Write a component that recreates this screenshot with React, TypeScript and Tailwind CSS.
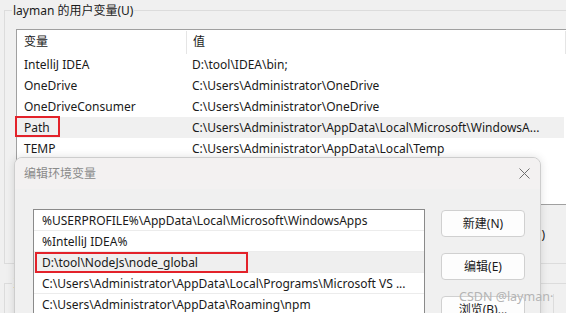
const userVars = [
  { name: 'IntelliJ IDEA', value: 'D:\\tool\\IDEA\\bin;' },
  { name: 'OneDrive', value: 'C:\\Users\\Administrator\\OneDrive' },
  { name: 'OneDriveConsumer', value: 'C:\\Users\\Administrator\\OneDrive' },
  { name: 'Path', value: 'C:\\Users\\Administrator\\AppData\\Local\\Microsoft\\WindowsA...' },
  { name: 'TEMP', value: 'C:\\Users\\Administrator\\AppData\\Local\\Temp' },
]

const pathEntries = [
  '%USERPROFILE%\\AppData\\Local\\Microsoft\\WindowsApps',
  '%IntelliJ IDEA%',
  'D:\\tool\\NodeJs\\node_global',
  'C:\\Users\\Administrator\\AppData\\Local\\Programs\\Microsoft VS ...',
  'C:\\Users\\Administrator\\AppData\\Roaming\\npm',
]

function DialogButton({ label }: { label: string }) {
  return (
    <button className="flex h-[27px] w-[84px] items-center justify-center rounded-[4px] border border-[#d0d0d0] bg-[#fdfdfd] text-[12px] text-[#1a1a1a]">
      {label}
    </button>
  )
}

export default function App() {
  return (
    <div className="relative h-[313px] w-[566px] overflow-hidden bg-[#f0f0f0] font-['Noto_Sans','Noto_Sans_CJK_SC',sans-serif] text-[12px] text-[#1a1a1a]">
      <div className="pl-[4px] pt-[10px]">
        {/* user variables group */}
        <div className="h-[254px] w-[600px] border-b border-l border-t border-[#dcdcdc]">
          <div className="-mt-[9px] ml-[7px] w-fit bg-[#f0f0f0] px-[1px] leading-[17px]">layman 的用户变量(U)</div>
          <div className="ml-[11px] mt-[10px] h-[176px] w-[600px] border border-[#a0a0a0] bg-white">
            <div className="flex h-[24px] items-center leading-[24px]">
              <div className="w-[169px] pl-[7px]">变量</div>
              <div className="h-[23px] w-px bg-[#e5e5e5]" />
              <div className="w-[378px] pl-[6px]">值</div>
              <div className="h-[23px] w-px bg-[#e5e5e5]" />
            </div>
            {userVars.map((v) => (
              <div
                key={v.name}
                className={`flex h-[21px] w-[547px] items-center leading-[21px] ${v.name === 'Path' ? 'bg-[#f0f0f0]' : ''}`}
              >
                <div className="relative w-[170px] pl-[7px]">
                  {v.name}
                  {v.name === 'Path' && (
                    <div className="absolute -left-[2px] -top-[1px] h-[21px] w-[45px] border-2 border-[#e3222a]" />
                  )}
                </div>
                <div className="whitespace-nowrap pl-[5px]">{v.value}</div>
              </div>
            ))}
          </div>
          <div className="ml-[478px] mt-[16px] flex h-[27px] w-[84px] items-center justify-center">删除(D)</div>
        </div>
        {/* system variables group */}
        <div className="mt-[19px] h-[60px] w-[600px] border-l border-t border-[#dcdcdc]">
          <div className="-mt-[9px] ml-[7px] w-fit bg-[#f0f0f0] px-[1px] leading-[17px]">系统变量(S)</div>
          <div className="ml-[548px] mt-[2px] h-[40px] w-px bg-[#dcdcdc]" />
        </div>
      </div>

      {/* edit dialog */}
      <div className="absolute left-[14px] top-[157px] h-[170px] w-[527px] overflow-hidden rounded-t-[8px] border border-[#cdcdcd] bg-[#f0f0f0] shadow-[0_0_8px_rgba(0,0,0,0.12)]">
        <div className="flex h-[31px] items-center justify-between bg-[#f3f1f1] pl-[9px] pr-[10px]">
          <span className="text-[#8a8a8a]">编辑环境变量</span>
          <svg width="11" height="11" viewBox="0 0 11 11" className="text-[#6e6e6e]">
            <path d="M0.5 0.5 L10.5 10.5 M10.5 0.5 L0.5 10.5" stroke="currentColor" strokeWidth="1" fill="none" />
          </svg>
        </div>
        <div className="flex gap-[16px] pl-[18px] pt-[20px]">
          <div className="h-[120px] w-[392px] border border-[#8a8a8a] bg-white">
            {pathEntries.map((p, i) => (
              <div
                key={p}
                className={`relative flex h-[21px] items-center whitespace-nowrap border-b border-[#ececec] pl-[8px] pt-[2px] leading-[18px] ${i === 2 ? 'bg-[#efefef]' : ''}`}
              >
                {p}
                {i === 2 && <div className="absolute left-[1px] top-0 h-[21px] w-[213px] border-2 border-[#e3222a]" />}
              </div>
            ))}
          </div>
          <div className="mt-[1px] flex flex-col gap-[16px]">
            <DialogButton label="新建(N)" />
            <DialogButton label="编辑(E)" />
            <DialogButton label="浏览(B)..." />
          </div>
        </div>
      </div>

      <div className="absolute left-[459px] top-[288px] text-[12.5px] leading-[18px] text-[#b4b4b4]">CSDN @layman·</div>
    </div>
  )
}
